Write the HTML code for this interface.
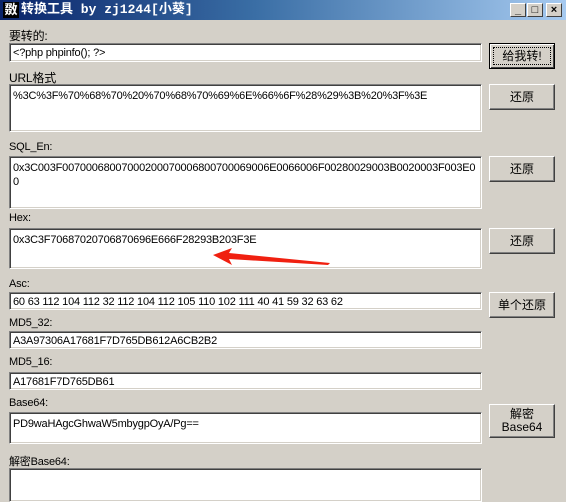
<!DOCTYPE html><html><head><meta charset="utf-8"><style>
*{margin:0;padding:0;box-sizing:border-box}
body{width:566px;height:502px;background:#d4d0c8;font-family:"Liberation Sans","Noto Sans CJK SC",sans-serif;font-size:11px;color:#000;position:relative;overflow:hidden}
.t{position:absolute;left:0;top:0;width:566px;height:20px;background:linear-gradient(90deg,#0a246a,#3a6ea5 45%,#a6caf0);color:#fff;font-weight:bold;font-size:13px;line-height:20px}
.ic{position:absolute;left:3px;top:2px;width:16px;height:16px;background:#000;color:#fff;font-size:13px;line-height:16px;text-align:center}
.tt{position:absolute;left:21px;top:0;font-family:"Liberation Mono","Noto Sans CJK SC",monospace}
.wb{position:absolute;top:3px;width:16px;height:14px;background:#d4d0c8;border:1px solid;border-color:#fff #404040 #404040 #fff;color:#000;font-size:11px;line-height:12px;text-align:center;font-weight:bold}
.l{position:absolute;left:9px;letter-spacing:-0.2px}
.f{position:absolute;left:9px;width:473px;background:#fff;border-top:1px solid #808080;border-left:1px solid #808080;border-right:1px solid #fff;border-bottom:1px solid #fff;box-shadow:inset 1px 1px #404040,inset -1px -1px #d4d0c8;padding:4px 3px 2px;letter-spacing:-0.2px;line-height:14px;word-break:break-all}
.b{position:absolute;left:489px;width:66px;height:26px;border:1px solid;border-color:#fff #404040 #404040 #fff;box-shadow:inset -1px -1px #808080;text-align:center;line-height:24px;font-size:12px}
</style></head><body>
<div class="t"><div class="ic">敪</div><span class="tt">转换工具 by zj1244[小葵]</span>
<div class="wb" style="left:510px">_</div><div class="wb" style="left:527px">□</div><div class="wb" style="left:546px">×</div></div>
<div class="l" style="top:27px;font-size:12px">要转的:</div>
<div class="f" style="top:43px;height:19px;padding-top:2px">&lt;?php phpinfo(); ?&gt;</div>
<div class="b" style="top:43px;border:1px solid #000;box-shadow:inset 1px 1px #fff,inset -1px -1px #404040;outline:1px dotted #000;outline-offset:-5px">给我转!</div>
<div class="l" style="top:69px;font-size:12px">URL格式</div>
<div class="f" style="top:84px;height:48px">%3C%3F%70%68%70%20%70%68%70%69%6E%66%6F%28%29%3B%20%3F%3E</div>
<div class="b" style="top:84px">还原</div>
<div class="l" style="top:141px">SQL_En:</div>
<div class="f" style="top:156px;height:53px">0x3C003F00700068007000200070006800700069006E0066006F00280029003B0020003F003E0<br>0</div>
<div class="b" style="top:156px">还原</div>
<div class="l" style="top:212px">Hex:</div>
<div class="f" style="top:228px;height:41px">0x3C3F7068702070687069​6E666F28293B203F3E</div>
<div class="b" style="top:228px">还原</div>
<svg style="position:absolute;left:205px;top:245px" width="130" height="25"><polygon points="8,10 27,3 24,8 125,18 123,20 24,14 27,20" fill="#f02010"/></svg>
<div class="l" style="top:278px">Asc:</div>
<div class="f" style="top:292px;height:18px;padding-top:2px">60 63 112 104 112 32 112 104 112 105 110 102 111 40 41 59 32 63 62</div>
<div class="b" style="top:292px">单个还原</div>
<div class="l" style="top:317px">MD5_32:</div>
<div class="f" style="top:331px;height:18px;padding-top:2px">A3A97306A17681F7D765DB612A6CB2B2</div>
<div class="l" style="top:356px">MD5_16:</div>
<div class="f" style="top:372px;height:18px;padding-top:2px">A17681F7D765DB61</div>
<div class="l" style="top:397px">Base64:</div>
<div class="f" style="top:412px;height:32px">PD9waHAgcGhwaW5mbygpOyA/Pg==</div>
<div class="b" style="top:404px;height:34px;line-height:13px;padding-top:3px">解密<br>Base64</div>
<div class="l" style="top:453px">解密Base64:</div>
<div class="f" style="top:468px;height:34px"></div>
</body></html>
